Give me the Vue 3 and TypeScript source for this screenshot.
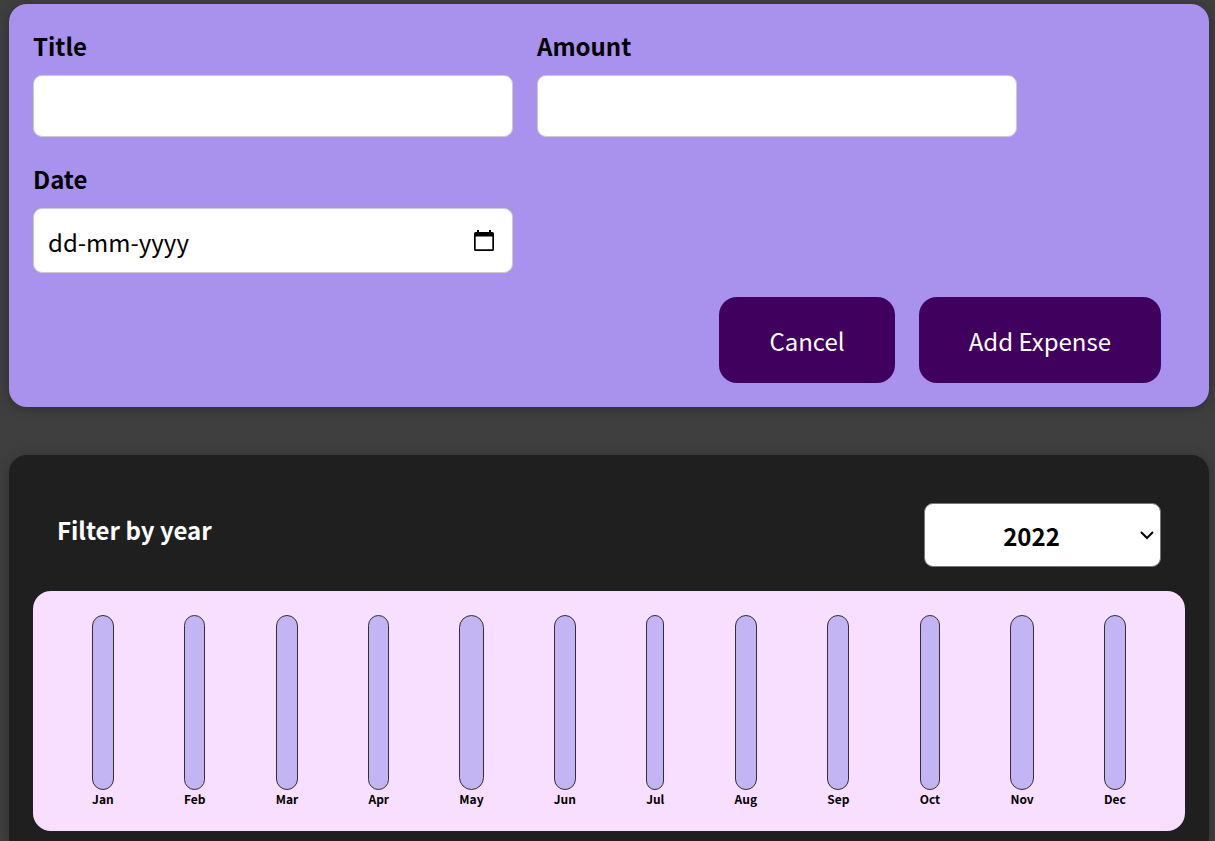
<script setup lang="ts">
import { ref } from 'vue'

const title = ref('')
const amount = ref('')
const date = ref('')
const year = ref('2022')
const years: string[] = ['2022', '2021', '2020', '2019']
const months: string[] = ['Jan', 'Feb', 'Mar', 'Apr', 'May', 'Jun', 'Jul', 'Aug', 'Sep', 'Oct', 'Nov', 'Dec']

function reset(): void {
  title.value = ''
  amount.value = ''
  date.value = ''
}
</script>

<template>
  <main class="page">
    <form class="card expense-form" @submit.prevent="reset">
      <div class="controls">
        <div class="control">
          <label for="title">Title</label>
          <input id="title" v-model="title" type="text" />
        </div>
        <div class="control">
          <label for="amount">Amount</label>
          <input id="amount" v-model="amount" type="text" inputmode="decimal" />
        </div>
        <div class="control">
          <label for="date">Date</label>
          <div class="date-field">
            <input id="date" v-model="date" type="text" placeholder="dd-mm-yyyy" />
            <button class="picker" type="button" aria-label="Open calendar">
              <svg width="20" height="21" viewBox="0 0 20 21" aria-hidden="true">
                <path d="M3 0h2v2h10V0h2v2h1.500a1.500 1.500 0 0 1 1.500 1.500V19.500a1.500 1.500 0 0 1-1.500 1.500H1.500A1.500 1.500 0 0 1 0 19.500V3.500A1.500 1.500 0 0 1 1.500 2H3zM1.700 6.500v12.800h16.600V6.500z" fill="#000" fill-rule="evenodd" />
              </svg>
            </button>
          </div>
        </div>
      </div>
      <div class="actions">
        <button class="action" type="button" @click="reset">Cancel</button>
        <button class="action" type="submit">Add Expense</button>
      </div>
    </form>

    <section class="card expenses">
      <div class="filter">
        <label for="year">Filter by year</label>
        <div class="select-field">
          <select id="year" v-model="year">
            <option v-for="y in years" :key="y" :value="y">{{ y }}</option>
          </select>
          <svg class="chevron" width="14" height="9" viewBox="0 0 14 9" aria-hidden="true">
            <path d="M1 1l6 6 6-6" fill="none" stroke="#000" stroke-width="2" />
          </svg>
        </div>
      </div>
      <div class="chart">
        <div v-for="month in months" :key="month" class="chart-bar">
          <div class="track"></div>
          <div class="month">{{ month }}</div>
        </div>
      </div>
    </section>
  </main>
</template>

<style>
html {
  background: #3f3f3f;
}
body {
  margin: 0;
}
</style>

<style scoped>
.page {
  display: flex;
  flex-direction: column;
  gap: 48px;
  padding: 4px 6px 24px 9px;
  font-family: "Noto Sans CJK JP", sans-serif;
  font-size: 24px;
  line-height: 35px;
  color: #000;
}
.page * {
  box-sizing: border-box;
}
input,
select,
button {
  font: inherit;
  color: inherit;
  margin: 0;
}
.card {
  padding: 24px;
  border-radius: 18px;
  box-shadow: 0 2px 12px rgba(0, 0, 0, 0.25);
}
.expense-form {
  background: #a892ee;
}
.controls {
  display: flex;
  flex-wrap: wrap;
  gap: 24px;
}
.control {
  width: 480px;
  max-width: 100%;
}
.control label {
  display: block;
  margin-bottom: 12px;
  font-weight: 700;
}
.control input {
  display: block;
  width: 100%;
  height: 62px;
  padding: 8px 14px;
  border: 1px solid #ccc;
  border-radius: 9px;
  background: #fff;
}
.date-field {
  position: relative;
}
.date-field input {
  height: 65px;
  padding-top: 10px;
}
.date-field input::placeholder {
  color: #000;
  opacity: 1;
}
.picker {
  position: absolute;
  top: 22px;
  right: 19px;
  display: flex;
  padding: 0;
  border: 0;
  background: none;
}
.actions {
  display: flex;
  justify-content: flex-end;
  gap: 24px;
  margin-top: 24px;
  padding-right: 24px;
}
.action {
  height: 86px;
  padding: 0 50px;
  border: 0;
  border-radius: 18px;
  background: #40005d;
  color: #fff;
}
.expenses {
  background: #1f1f1f;
}
.filter {
  display: flex;
  align-items: center;
  justify-content: space-between;
  padding: 24px;
}
.filter label {
  padding-bottom: 12px;
  color: #fff;
  font-weight: 700;
}
.select-field {
  position: relative;
}
.filter select {
  display: block;
  appearance: none;
  width: 237px;
  height: 64px;
  padding: 0 22px 0 0;
  border: 1px solid #767676;
  border-radius: 9px;
  background: #fff;
  font-weight: 700;
  text-align: center;
  text-align-last: center;
}
.chevron {
  position: absolute;
  top: 28px;
  right: 7px;
  pointer-events: none;
}
.chart {
  display: flex;
  justify-content: space-around;
  padding: 24px;
  border-radius: 18px;
  background: #f8dfff;
}
.chart-bar {
  display: flex;
  flex-direction: column;
}
.track {
  height: 175px;
  border: 1px solid #313131;
  border-radius: 18px;
  background: #c3b4f3;
}
.month {
  font-size: 12px;
  line-height: 17px;
  font-weight: 700;
  text-align: center;
}
</style>
